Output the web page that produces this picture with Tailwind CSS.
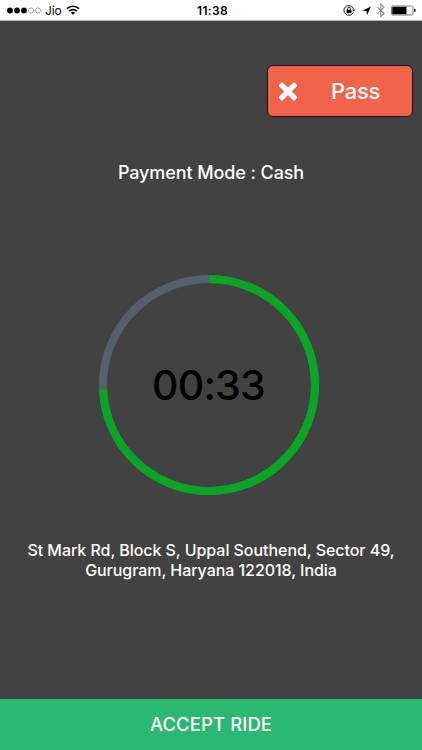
<!DOCTYPE html>
<html lang="en">
<head>
<meta charset="utf-8">
<meta name="viewport" content="width=device-width, initial-scale=1">
<title>Ride request</title>
<script src="https://cdn.jsdelivr.net/npm/@tailwindcss/browser@4"></script>
</head>
<body class="h-[750px] w-[422px] overflow-hidden bg-[#424242] font-['Inter','Liberation_Sans',sans-serif] text-white">
<div class="flex h-[750px] w-[422px] flex-col">
  <header class="grid h-[21px] shrink-0 grid-cols-3 border-b border-[#b5b5b5] bg-white text-black">
    <div class="flex items-center pl-[7px]">
      <svg class="h-[20px] w-[35px]" viewBox="0 0 35 20" fill="none" stroke="#777" stroke-width=".7">
        <g fill="#000" stroke="none"><circle cx="3" cy="10.5" r="2.9"/><circle cx="10" cy="10.5" r="2.9"/><circle cx="17" cy="10.5" r="2.9"/></g>
        <circle cx="24" cy="10.5" r="2.6"/><circle cx="31" cy="10.5" r="2.6"/>
      </svg>
      <span class="ml-[3px] w-[16px] whitespace-nowrap pt-[2px] text-[12px] leading-[18px] tracking-[-0.1px]">Jio</span>
      <svg class="ml-[5px] h-[20px] w-[14px]" viewBox="0 0 14 20" fill="none" stroke="#000" stroke-width="1.7">
        <path d="M1 8.7a8.6 8.6 0 0 1 12 0M3.2 11.2a5.4 5.4 0 0 1 7.6 0"/>
        <path d="M7 14.8 4.9 12.7a3 3 0 0 1 4.2 0z" fill="#000" stroke="none"/>
      </svg>
    </div>
    <div class="pl-[3px] pt-[2px] text-center text-[12px] font-semibold leading-[18px] tracking-[0.3px]">11:38</div>
    <div class="flex items-center justify-end pr-[6px]">
      <svg class="h-[20px] w-[73px]" viewBox="0 0 73 20" fill="none">
        <path d="M10.4 12.2a4.9 4.9 0 1 1 .1-3.3" stroke="#222" stroke-width="1"/>
        <path d="M8.9 9.4h3.4l-1.7 2.4z" fill="#222"/>
        <path d="M3.6 9.8h4.8v3.3H3.6z" fill="#000"/>
        <path d="M4.6 10V8.6a1.4 1.4 0 0 1 2.8 0V10" stroke="#000" stroke-width=".9"/>
        <path d="m28 6.5-8.6 4.2 4.1.4.4 4.1z" fill="#000"/>
        <path d="m34.6 7.2 6.4 6.4-3.1 2.9V4.3l3.1 2.9-6.4 6.4" stroke="#8a8a8a" stroke-width="1.1"/>
        <rect x="48.5" y="6" width="21.5" height="9" rx="1.3" stroke="#555" stroke-width=".8"/>
        <path d="M49.3 6.8h14.2v7.4H49.3z" fill="#000"/>
        <path d="M71 8.8q2 .3 2 1.7t-2 1.7z" fill="#333"/>
      </svg>
    </div>
  </header>

  <main class="flex min-h-0 flex-1 flex-col">
    <div class="flex justify-end pr-[9px] pt-[44px]">
      <button class="flex h-[52px] w-[146px] items-center rounded-[6px] border-[1.5px] border-[#1e0d09] bg-[#f0644c] pl-[9px]">
        <svg class="h-[22px] w-[22px]" viewBox="0 0 22 22" fill="#fff">
          <g transform="rotate(45 11 11.5)"><rect x="0" y="8.9" width="22" height="5.2" rx="1.3"/><rect x="8.4" y=".5" width="5.2" height="22" rx="1.3"/></g>
        </svg>
        <span class="ml-[32px] text-[22px] font-medium leading-[28px] tracking-[-0.3px]">Pass</span>
      </button>
    </div>
    <p class="mt-[44px] text-center text-[18px] font-medium leading-[24px] tracking-[-0.1px]">Payment Mode : Cash</p>
    <div class="ml-[99px] mt-[90px] grid h-[220px] w-[220px] place-items-center">
      <svg class="col-start-1 row-start-1 h-[220px] w-[220px] -rotate-90" viewBox="0 0 220 220" fill="none" stroke-width="8">
        <circle cx="110" cy="110" r="106" stroke="#56606d"/>
        <circle cx="110" cy="110" r="106" stroke="#07a722" pathLength="1000" stroke-dasharray="743.5 1000"/>
      </svg>
      <span class="col-start-1 row-start-1 pr-[1px] text-[41px] font-medium leading-[48px] tracking-[-0.8px] text-black">00:33</span>
    </div>
    <p class="mt-[46px] whitespace-nowrap text-center text-[16px] font-medium leading-[19.5px] tracking-[-0.05px]">St Mark Rd, Block S, Uppal Southend, Sector 49,<br>Gurugram, Haryana 122018, India</p>
  </main>

  <button class="h-[51px] shrink-0 bg-[#2ab872] text-[18.5px] font-medium leading-[51px] tracking-[0.1px]">ACCEPT RIDE</button>
</div>
</body>
</html>
